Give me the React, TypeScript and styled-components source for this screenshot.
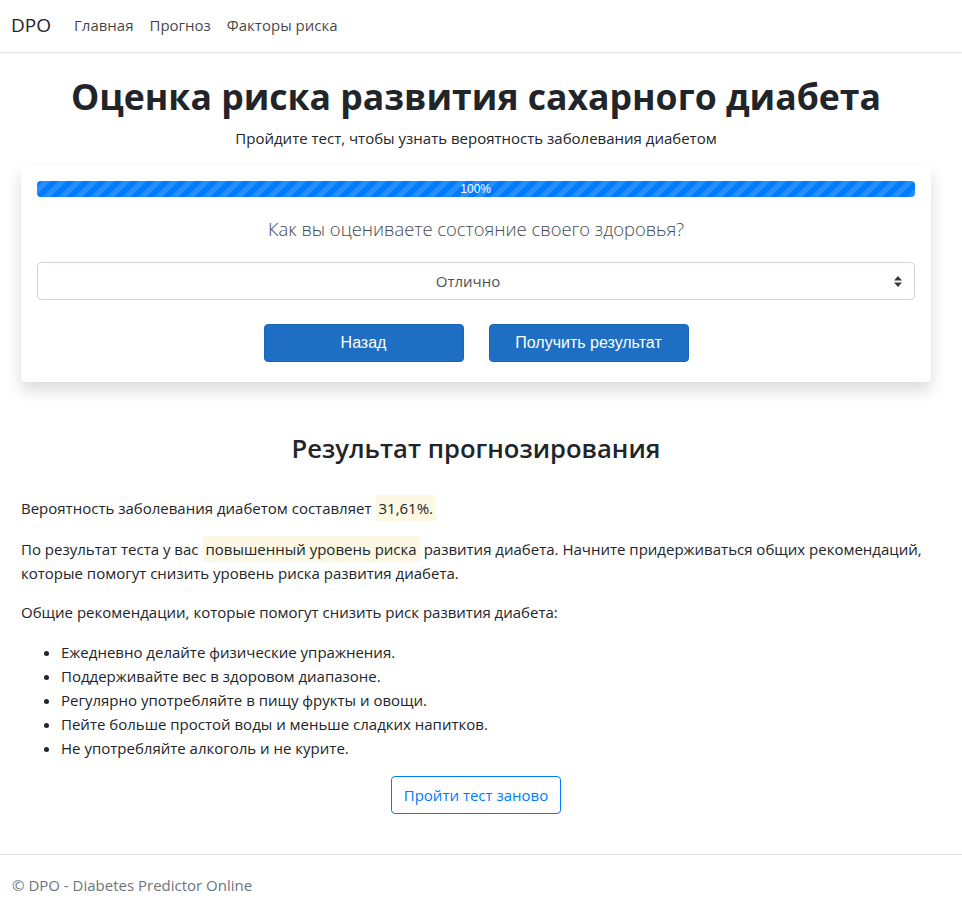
import React from "react";
import styled, { createGlobalStyle } from "styled-components";

const Global = createGlobalStyle`
  html, body { margin: 0; padding: 0; background: #fff; }
  body {
    font-family: "Open Sans", "Noto Sans", sans-serif;
    font-size: 15px;
    line-height: 24px;
    color: #212529;
  }
  * { box-sizing: border-box; }
`;

const Navbar = styled.nav`
  height: 53px;
  border-bottom: 1px solid #e5e5e5;
  display: flex;
  align-items: center;
  padding: 0 11px 2px;
  box-shadow: 0 1px 2px rgba(0,0,0,0.03);
`;

const Brand = styled.a`
  font-size: 19px;
  color: #212529;
  margin-right: 23px;
  text-decoration: none;
`;

const NavLink = styled.a`
  font-size: 15px;
  color: rgba(0, 0, 0, 0.75);
  margin-right: 16px;
  text-decoration: none;
`;

const Container = styled.main`
  width: 910px;
  margin-left: 21px;
  display: flex;
  flex-direction: column;
`;

const Title = styled.h1`
  margin: 20px 0 0;
  font-size: 35.6px;
  line-height: 46px;
  font-weight: 700;
  text-align: center;
`;

const Lead = styled.p`
  margin: 7px 0 0;
  text-align: center;
  font-size: 15px;
  line-height: 24px;
`;

const Card = styled.section`
  margin-top: 15px;
  background: #fff;
  border-radius: 4px;
  box-shadow: 0 8px 16px rgba(0, 0, 0, 0.15);
  padding: 16px 16px 20px;
  display: flex;
  flex-direction: column;
`;

const Progress = styled.div`
  height: 16px;
  border-radius: 4px;
  background: #e9ecef;
  overflow: hidden;
  display: flex;
`;

const ProgressBar = styled.div`
  background-color: #007bff;
  background-image: linear-gradient(
    45deg,
    rgba(255, 255, 255, 0.15) 25%,
    transparent 25%,
    transparent 50%,
    rgba(255, 255, 255, 0.15) 50%,
    rgba(255, 255, 255, 0.15) 75%,
    transparent 75%,
    transparent
  );
  background-size: 16px 16px;
  transform: scaleX(-1);
  display: flex;
  align-items: center;
  justify-content: center;
`;

const ProgressLabel = styled.span`
  transform: scaleX(-1);
  color: #fff;
  font-family: "Liberation Sans", Arial, sans-serif;
  font-size: 12px;
  line-height: 16px;
`;

const Question = styled.h4`
  margin: 17px 0 0;
  text-align: center;
  font-weight: 300;
  font-size: 18.4px;
  line-height: 30px;
  color: #454b52;
`;

const SelectBox = styled.div`
  margin-top: 18px;
  height: 38px;
  padding: 0 28px 0 12px;
  border: 1px solid #ced4da;
  border-radius: 4px;
  position: relative;
  display: flex;
  align-items: center;
  justify-content: center;
  color: #495057;
  font-size: 15px;
`;

const Arrows = styled.svg`
  position: absolute;
  right: 12px;
  top: 13px;
`;

const ButtonRow = styled.div`
  margin-top: 24px;
  display: flex;
  justify-content: center;
  gap: 25px;
`;

const PrimaryButton = styled.button`
  width: 200px;
  height: 38px;
  border: 1px solid #1a65b8;
  background: #1e6ec4;
  color: #fff;
  border-radius: 4px;
  font-family: "Liberation Sans", Arial, sans-serif;
  font-size: 16px;
  cursor: pointer;
`;

const ResultTitle = styled.h3`
  margin: 50px 0 0;
  text-align: center;
  font-size: 25.6px;
  line-height: 34px;
  font-weight: 600;
`;

const Para = styled.p<{ $top: number }>`
  margin: ${(p) => p.$top}px 0 0;
  font-size: 15px;
  line-height: 24px;
`;

const Mark = styled.mark`
  background: #fcf8e3;
  color: #212529;
  padding: 3px 3px;
  margin: 0 4px;
`;

const List = styled.ul`
  margin: 16px 0 0;
  padding-left: 40px;
  font-size: 15px;
  line-height: 24px;
`;

const Outline = styled.button`
  align-self: center;
  margin-top: 16px;
  height: 38px;
  padding: 0 12px;
  border: 1px solid #007bff;
  background: #fff;
  color: #007bff;
  border-radius: 4px;
  font-family: "Open Sans", sans-serif;
  font-size: 15px;
  cursor: pointer;
`;

const Footer = styled.footer`
  margin-top: 40px;
  border-top: 1px solid #dee2e6;
  padding: 18px 12px;
  color: #6c757d;
  font-size: 15px;
  line-height: 24px;
`;

export default function App() {
  return (
    <>
      <Global />
      <Navbar>
        <Brand href="#">DPO</Brand>
        <NavLink href="#">Главная</NavLink>
        <NavLink href="#">Прогноз</NavLink>
        <NavLink href="#">Факторы риска</NavLink>
      </Navbar>
      <Container>
        <Title>Оценка риска развития сахарного диабета</Title>
        <Lead>Пройдите тест, чтобы узнать вероятность заболевания диабетом</Lead>
        <Card>
          <Progress>
            <ProgressBar style={{ width: "100%" }}>
              <ProgressLabel>100%</ProgressLabel>
            </ProgressBar>
          </Progress>
          <Question>Как вы оцениваете состояние своего здоровья?</Question>
          <SelectBox>
            Отлично
            <Arrows width="8" height="11" viewBox="0 0 8 11">
              <path d="M4 0 L8 4.5 H0 Z M4 11 L0 6.5 H8 Z" fill="#343a40" />
            </Arrows>
          </SelectBox>
          <ButtonRow>
            <PrimaryButton>Назад</PrimaryButton>
            <PrimaryButton>Получить результат</PrimaryButton>
          </ButtonRow>
        </Card>
        <ResultTitle>Результат прогнозирования</ResultTitle>
        <Para $top={30}>
          Вероятность заболевания диабетом составляет<Mark>31,61%.</Mark>
        </Para>
        <Para $top={17}>
          По результат теста у вас<Mark>повышенный уровень риска</Mark>развития диабета. Начните
          придерживаться общих рекомендаций, которые помогут снизить уровень риска развития диабета.
        </Para>
        <Para $top={15}>Общие рекомендации, которые помогут снизить риск развития диабета:</Para>
        <List>
          <li>Ежедневно делайте физические упражнения.</li>
          <li>Поддерживайте вес в здоровом диапазоне.</li>
          <li>Регулярно употребляйте в пищу фрукты и овощи.</li>
          <li>Пейте больше простой воды и меньше сладких напитков.</li>
          <li>Не употребляйте алкоголь и не курите.</li>
        </List>
        <Outline>Пройти тест заново</Outline>
      </Container>
      <Footer>© DPO - Diabetes Predictor Online</Footer>
    </>
  );
}
